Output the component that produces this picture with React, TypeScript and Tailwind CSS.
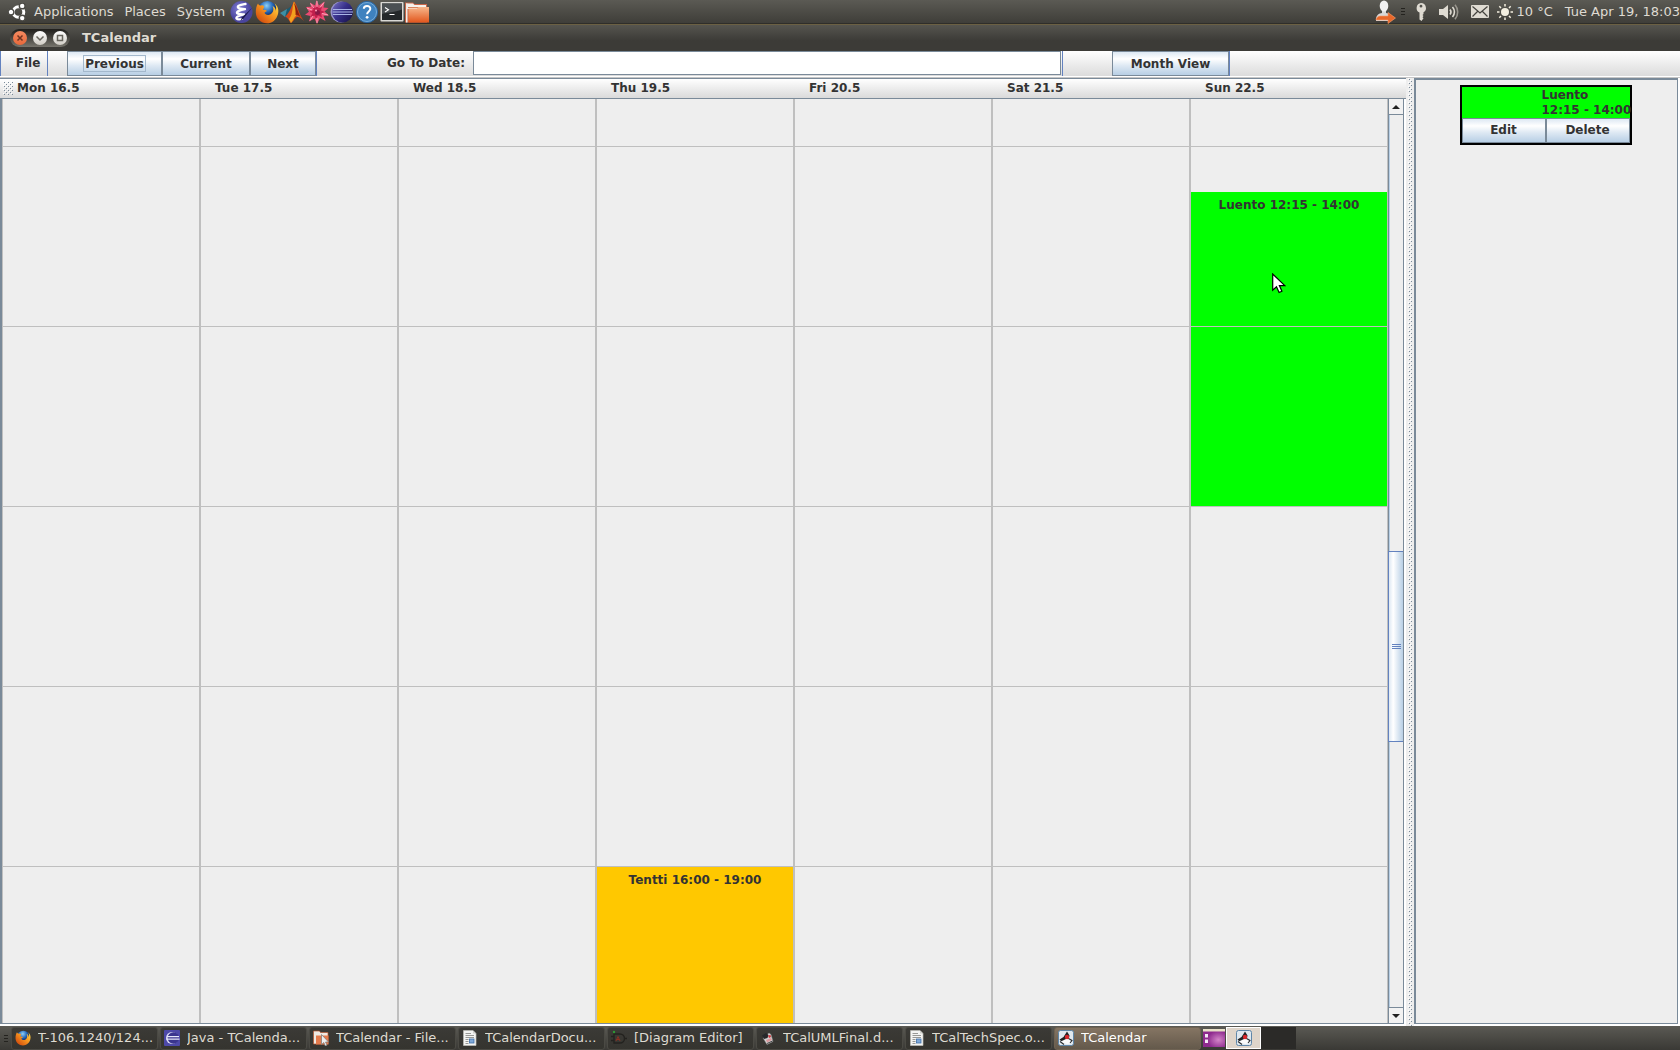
import React from "react";

type IconProps = { className?: string };

/* ---------- panel icons ---------- */

function UbuntuLogo() {
  return (
    <svg viewBox="0 0 18 18" className="size-[18px] shrink-0">
      <circle cx="10.500" cy="9" r="5.300" fill="none" stroke="#fff" strokeWidth="3" />
      <g fill="#fff" stroke="#4b4a45" strokeWidth="1.400">
        <circle cx="3" cy="9" r="2.900" />
        <circle cx="14.200" cy="2.900" r="2.900" />
        <circle cx="14.200" cy="15.100" r="2.900" />
      </g>
    </svg>
  );
}

function EmacsIcon() {
  return (
    <svg viewBox="0 0 24 24" className="size-6">
      <defs>
        <radialGradient id="emacs" cx="0.4" cy="0.35">
          <stop offset="0" stopColor="#8380d4" />
          <stop offset="1" stopColor="#4a459e" />
        </radialGradient>
      </defs>
      <circle cx="11.500" cy="12" r="11" fill="url(#emacs)" />
      <path d="M15.500 4C10.500 5 7 5.500 8 7.500C9 8.800 12 9 15 9.200C10 10 6.500 11.500 7 13C8 14.300 12 14.300 14 14.500C9.500 15.500 5.500 17 6.500 18.500C7.500 19.800 10 19.500 12 19" fill="none" stroke="#fff" strokeWidth="2.300" strokeLinecap="round" strokeLinejoin="round" />
      <path d="M22.500 7.500l-9 11-3 2.500 1.500-3.700Z" fill="#1b1a4c" />
    </svg>
  );
}

function FirefoxIcon({ className = "size-6" }: IconProps) {
  return (
    <svg viewBox="0 0 24 24" className={className}>
      <defs>
        <radialGradient id="fxGlobe" cx="0.45" cy="0.25">
          <stop offset="0" stopColor="#8fd0f5" />
          <stop offset="0.6" stopColor="#2a6fc0" />
          <stop offset="1" stopColor="#12326f" />
        </radialGradient>
        <linearGradient id="fxTail" x1="1" y1="0" x2="0" y2="1">
          <stop offset="0" stopColor="#ffe14a" />
          <stop offset="0.45" stopColor="#f6921e" />
          <stop offset="1" stopColor="#c8380a" />
        </linearGradient>
      </defs>
      <circle cx="12.500" cy="10.500" r="9.500" fill="url(#fxGlobe)" />
      <path d="M3 3.500C3.500 5 4.500 5.500 6 5.500C8 4.500 9.500 6 9 7.500C8.500 8.500 8 9 8 10C9 9.500 11 10 12 11C11 12 9.500 12 9.500 13C11 15.500 15 15.500 17 13C19 10.500 18.500 8 17.500 6C20 7 21 9 20.500 11C21.500 9 21.500 6 19.500 3.500C23 6 24 10 23 14C21.500 20 17 23.300 12 23.300C6 23.300 1 19 .8 12.500C.7 9 1.500 5.500 3 3.500Z" fill="url(#fxTail)" />
    </svg>
  );
}

function MatlabIcon() {
  return (
    <svg viewBox="0 0 24 24" className="size-6">
      <path d="M0 13l7-4 3 3-5 5Z" fill="#3d8fa5" />
      <path d="M7 9c2-.5 4-3 6-6l-1 12-4 4-3-2Z" fill="#1c5a70" />
      <path d="M14 1.500C11.500 5 11 11 5 17c2 0 3 1 5.500 6 3-1 4-5 6.500-6 2-.5 4 1 7 4C19 15 17 4 14 1.500Z" fill="#d2491a" />
      <path d="M14 1.500c-2 4-.5 12-5 17.500l2 4c2-2 3-6 5-7 1-5 0-11-2-14.500Z" fill="#f3a01e" />
      <path d="M14 3c1 3 2 9 1.500 12 1.500-1 3 .5 5 2C18 13 17 6 14 3Z" fill="#8c200c" />
    </svg>
  );
}

function SpikyIcon() {
  return (
    <svg viewBox="0 0 24 24" className="size-6">
      <path d="M11.500 0l2.500 5.500L19.500 1.500 18.500 7.500 23.500 8 19.500 11.500 24 15.500l-5.500.3L20.500 21l-5.500-3-3 6-2.500-5.500L4 21.500l1.500-5.500L0 14.800 4 11.800 1 7l5-.2L5 2.500l5 3Z" fill="#ea4a72" />
      <path d="M12 5l1.500 3 3.500-1.500-1 4 4 1.500-4 1.500 1 4-4-2-2 3.500-1.500-3.500-4 1.500L7.500 13 4.500 11.500l4-1.500L7.500 6l3 2Z" fill="#c0204c" />
      <path d="M12 1v6M5.500 3.500L9 8M19 2.500l-4 5M2 8l5 2M23 15l-6-1.500M5 20.500l3-4.500M12 23v-5" stroke="#ffb0c2" strokeWidth="0.900" />
      <circle cx="12.500" cy="12.500" r="2.500" fill="#8c1846" />
      <circle cx="11" cy="10.500" r="1" fill="#ffa0b8" />
    </svg>
  );
}

function EclipseIcon() {
  return (
    <svg viewBox="0 0 24 24" className="size-6">
      <defs>
        <linearGradient id="ecl" x1="0" y1="0" x2="1" y2="0.8">
          <stop offset="0" stopColor="#7a74c4" />
          <stop offset="0.5" stopColor="#37308a" />
          <stop offset="1" stopColor="#1a1450" />
        </linearGradient>
      </defs>
      <circle cx="11" cy="12" r="10.500" fill="#9a95cc" />
      <circle cx="12.500" cy="12" r="10.500" fill="url(#ecl)" />
      <path d="M3 9.500h19M2.500 12h20.500M3 14.500h19" stroke="#a9b4e6" strokeWidth="1" />
    </svg>
  );
}

function HelpIcon() {
  return (
    <svg viewBox="0 0 24 24" className="size-6">
      <circle cx="12" cy="12" r="10.600" fill="#3f82bf" stroke="#2a65a0" />
      <circle cx="12" cy="12" r="9.500" fill="none" stroke="#83b4dc" strokeWidth="0.800" />
      <path d="M8.800 8.800C9 5 15.500 5.200 15.300 9c-.2 2.400-3.200 2.500-3.200 5.300" fill="none" stroke="#fff" strokeWidth="2" />
      <circle cx="12.100" cy="17.300" r="1.400" fill="#fff" />
    </svg>
  );
}

function TerminalIcon() {
  return (
    <svg viewBox="0 0 24 24" className="size-6">
      <rect x="0.500" y="2" width="23" height="19.500" rx="0.800" fill="#d9d8d4" />
      <rect x="2" y="3.500" width="20" height="16.500" fill="#24282a" />
      <path d="M2 3.500h20v6C14 12.500 8 12 2 14Z" fill="#4b5053" />
      <path d="M5 7.500l3.500 2.200L5 12M9.500 14.500h5" stroke="#fff" strokeWidth="1.100" fill="none" />
    </svg>
  );
}

function FolderIcon() {
  return (
    <svg viewBox="0 0 24 24" className="size-6">
      <defs>
        <linearGradient id="fold" x1="0" y1="0" x2="0" y2="1">
          <stop offset="0" stopColor="#f7b78c" />
          <stop offset="1" stopColor="#e2561c" />
        </linearGradient>
      </defs>
      <path d="M0 2.500h8l1.500 1.500H22v18.500H0Z" fill="#c9674a" />
      <path d="M1 3.500h7l1.500 1.500H21v4H1Z" fill="#f5f1ec" />
      <path d="M1 3.500h1.500v19H1Z" fill="#f2ece4" />
      <path d="M3 7.500h19" stroke="#d9825c" />
      <path d="M3.500 8.500l8.500 0 1.500-1.500H24v15.500H3.500Z" fill="url(#fold)" />
    </svg>
  );
}

function UserSwitchIcon() {
  return (
    <svg viewBox="0 0 22 24" className="h-6 w-[22px]">
      <path d="M1 20c0-5 3-6.500 6-7v-2h4v2c3 .5 5 2 5 6v2H1Z" fill="#d8d8d8" />
      <ellipse cx="9" cy="6" rx="4.300" ry="5.500" fill="#f1f1f1" />
      <path d="M5 16h8v-3.500l7.500 5.500-7.500 5.500V20H1c0-2 2-4 4-4Z" fill="#e8682a" stroke="#f7a070" strokeWidth="0.600" />
    </svg>
  );
}

function KeyIcon() {
  return (
    <svg viewBox="0 0 12 18" className="h-[18px] w-3" fill="#dfdbd2">
      <path fillRule="evenodd" d="M6 0a5 5 0 0 1 2.500 9.300V11l-1 1 1 1-1 1.200 1 1L6.500 18 4.500 16.500V9.500A5 5 0 0 1 6 0Zm0 1.800a1.400 1.400 0 1 0 0 2.800 1.400 1.400 0 0 0 0-2.800Z" />
    </svg>
  );
}

function SpeakerIcon() {
  return (
    <svg viewBox="0 0 20 18" className="h-[18px] w-5" fill="none" stroke="#dfdbd2" strokeWidth="1.600">
      <path d="M0 6h4l5-4v14l-5-4H0Z" fill="#dfdbd2" stroke="none" />
      <path d="M11 6.500a4 4 0 0 1 0 5M13.500 4a7.500 7.500 0 0 1 0 10" />
      <path d="M16 1.800a11 11 0 0 1 0 14.400" stroke="#98958d" />
    </svg>
  );
}

function MailIcon() {
  return (
    <svg viewBox="0 0 18 13" className="h-[13px] w-[18px]">
      <rect width="18" height="13" rx="1" fill="#dfdbd2" />
      <path d="M1.500 1.500L9 8l7.500-6.500M1.500 11.500L6.500 6.500M16.500 11.500l-5-5" stroke="#45443f" fill="none" strokeWidth="1.200" />
    </svg>
  );
}

function SunIcon() {
  return (
    <svg viewBox="0 0 16 16" className="size-4">
      <circle cx="8" cy="8" r="4" fill="#f3eee0" />
      <path d="M8 0v2.500M8 13.500V16M0 8h2.500M13.500 8H16M2.300 2.300l1.700 1.700M12 12l1.700 1.700M2.300 13.700L4 12M12 4l1.700-1.700" stroke="#f3eee0" strokeWidth="1.500" />
    </svg>
  );
}

/* ---------- task list icons ---------- */

function EclipseTask() {
  return (
    <svg viewBox="0 0 16 16" className="size-4">
      <rect width="16" height="16" rx="1" fill="#4d49a8" />
      <circle cx="8" cy="8" r="6" fill="#dcdcf4" />
      <circle cx="9.300" cy="8" r="5.700" fill="#3a358e" />
      <path d="M3 6.700h12M2.500 9.200h13" stroke="#e6e8fa" strokeWidth="1.200" />
    </svg>
  );
}

function FilesTask() {
  return (
    <svg viewBox="0 0 16 16" className="size-4">
      <path d="M.5 1h6l1 1.500H15V14H.5Z" fill="#efe9e2" stroke="#b6552f" strokeWidth="0.700" />
      <path d="M3 5.500h12.500v9H3Z" fill="#e47a4c" />
      <path d="M8.500 4.500v10l2.300-2 1.500 3.500 1.700-.8-1.500-3.200h3Z" fill="#eee" stroke="#777" strokeWidth="0.700" />
    </svg>
  );
}

function DocTask() {
  return (
    <svg viewBox="0 0 16 16" className="size-4">
      <path d="M1.500.5H11l3 3v12H1.500Z" fill="#f4f4f2" stroke="#bdbdb8" strokeWidth="0.700" />
      <path d="M11 .5v3h3" fill="#d0d0cc" />
      <path d="M3.500 3.500H9M3.500 5.500h8.500M3.500 7.500h8.500M3.500 9.500h3M3.500 11.500h3M3.500 13.500h3" stroke="#8d8d8a" strokeWidth="0.900" />
      <rect x="7.500" y="9" width="4.500" height="4" fill="#7fa8d8" stroke="#3f6fa8" strokeWidth="0.800" />
    </svg>
  );
}

function DiaTask() {
  return (
    <svg viewBox="0 0 16 16" className="size-4" fill="none">
      <path d="M3 4h6a4.500 4.500 0 0 1 0 9H3ZM0 6.500h3M0 10.500h3M13.500 8.500H16" stroke="#23221f" strokeWidth="1.400" />
      <path d="M5 11l2-4.500L9 11M5.500 9.500h3" stroke="#8a2f22" />
      <circle cx="3" cy="2" r="1.200" fill="#2e9a35" />
    </svg>
  );
}

function DiagramTask() {
  return (
    <svg viewBox="0 0 16 16" className="size-4">
      <path d="M3 8l6-5 2 1.500 2 7-6 3Z" fill="#d4d4d4" stroke="#8a8a8a" strokeWidth="0.500" />
      <path d="M2 5.500L6 3l2.500 2-1 3L4 9Z" fill="#26282a" />
      <path d="M8 5.500l2.500-.5.5 2-2 1Z" fill="#d0343c" />
      <path d="M6 10l5-2 1 2-5 2.500Z" fill="#d99a9e" />
      <path d="M7 13.500l5.500-2.500" stroke="#444" />
    </svg>
  );
}

function JavaTask() {
  return (
    <svg viewBox="0 0 16 16" className="size-4">
      <rect x="0.500" y="0.500" width="15" height="15" rx="2" fill="#dfe8ef" stroke="#5f86a8" />
      <path d="M9 1.500l2.500 4-1 5L3 11 1.500 9.500l4-2.500Z" fill="#202224" />
      <path d="M4 11l5-2.500 3 .5 1.500 4-4 1-5-1Z" fill="#fafafa" />
      <path d="M2 11.500l4 3M10.500 8.500l3.500 2-2 2.500" stroke="#2a2c2e" strokeWidth="1.100" fill="none" />
      <circle cx="9" cy="7" r="2.200" fill="#d8272c" />
    </svg>
  );
}

/* ---------- Metal look and feel pieces ---------- */

const METAL_BUTTON =
  "border border-[#7a8a99] bg-linear-[180deg,#dde8f3_0%,#ffffff_30%,#dde8f3_60%,#b8cfe5_100%] text-center";

function Bumps({ id, className }: { id: string; className: string }) {
  return (
    <svg className={className} aria-hidden="true">
      <defs>
        <pattern id={id} width="4" height="4" patternUnits="userSpaceOnUse">
          <rect width="1" height="1" fill="#fff" />
          <rect x="1" y="1" width="1" height="1" fill="#7a8a99" />
          <rect x="2" y="2" width="1" height="1" fill="#fff" />
          <rect x="3" y="3" width="1" height="1" fill="#7a8a99" />
        </pattern>
      </defs>
      <rect width="100%" height="100%" fill={`url(#${id})`} />
    </svg>
  );
}

function PanelGrip() {
  return (
    <span className="flex flex-col gap-[2px]">
      <i className="h-px w-1 bg-[#24231f]" />
      <i className="h-px w-1 bg-[#24231f]" />
      <i className="h-px w-1 bg-[#24231f]" />
    </span>
  );
}

function TopPanel() {
  return (
    <header className="flex h-6 shrink-0 items-center border-b border-[#2f2e2a] bg-linear-to-b from-[#5b5a54] to-[#3f3e39] pl-2 text-[13px] leading-4 text-[#dfdbd2]">
      <UbuntuLogo />
      <nav className="ml-2 flex gap-[11px]">
        <button>Applications</button>
        <button>Places</button>
        <button>System</button>
      </nav>
      <div className="ml-[5px] flex gap-px">
        <button aria-label="Emacs"><EmacsIcon /></button>
        <button aria-label="Firefox"><FirefoxIcon /></button>
        <button aria-label="Matlab"><MatlabIcon /></button>
        <button aria-label="Mathematica"><SpikyIcon /></button>
        <button aria-label="Eclipse"><EclipseIcon /></button>
        <button aria-label="Help"><HelpIcon /></button>
        <button aria-label="Terminal"><TerminalIcon /></button>
        <button aria-label="Files"><FolderIcon /></button>
      </div>
      <div className="ml-auto flex items-center whitespace-nowrap">
        <UserSwitchIcon />
        <span className="mr-2.5 ml-1 flex"><PanelGrip /></span>
        <KeyIcon />
        <span className="ml-3 flex"><SpeakerIcon /></span>
        <span className="mr-2 ml-3 flex"><MailIcon /></span>
        <SunIcon />
        <span className="ml-1">10 °C</span>
        <span className="ml-3">Tue Apr 19, 18:03</span>
      </div>
    </header>
  );
}

function TitleBar() {
  return (
    <div className="flex h-[27px] shrink-0 items-center border-t border-[#6b6043] bg-linear-to-b from-[#56554f] to-[#3c3b37] to-60% pl-2.5">
      <div className="flex h-[18px] w-[60px] items-center justify-center gap-1.5 rounded-full bg-linear-to-b from-[#201f1c] to-[#77756d]">
        <button aria-label="Close" className="rounded-full bg-linear-to-b from-[#f58a60] to-[#e8683a]">
          <svg viewBox="0 0 14 14" className="size-3.5"><path d="M4.500 4.500l5 5M9.500 4.500l-5 5" stroke="#6f3422" strokeWidth="1.500" /></svg>
        </button>
        <button aria-label="Minimize" className="rounded-full bg-linear-to-b from-white to-[#d0cdc5]">
          <svg viewBox="0 0 14 14" className="size-3.5"><path d="M3.500 5.500L7 9l3.500-3.500" fill="none" stroke="#66645c" strokeWidth="1.500" /></svg>
        </button>
        <button aria-label="Maximize" className="rounded-full bg-linear-to-b from-white to-[#d0cdc5]">
          <svg viewBox="0 0 14 14" className="size-3.5"><rect x="4.500" y="4.500" width="5" height="5" fill="none" stroke="#66645c" strokeWidth="1.500" /></svg>
        </button>
      </div>
      <h1 className="ml-3 text-[13px] leading-4 font-bold text-[#dfdbd2]">TCalendar</h1>
    </div>
  );
}

function Toolbar() {
  return (
    <div className="flex h-[27px] shrink-0 border-b border-[#c6c6c6] bg-linear-to-b from-white to-[#dadada]">
      <div className="flex w-full border-b border-white leading-[25px]">
        <button className="w-12 border-x border-[#6382bf] pl-2">File</button>
        <div className="ml-[19px] flex border-r border-[#6382bf]">
          <button className={`${METAL_BUTTON} flex w-[95px] items-center justify-center`}>
            <span className="h-[17px] w-[63px] border border-[#a3b8cc] leading-4">Previous</span>
          </button>
          <button className={`${METAL_BUTTON} w-[88px]`}>Current</button>
          <button className={`${METAL_BUTTON} w-[66px]`}>Next</button>
        </div>
        <label htmlFor="goto" className="ml-[70px] w-[86px] whitespace-nowrap">Go To Date:</label>
        <div className="flex max-w-[590px] min-w-0 flex-1 border-r border-[#6382bf]">
          <input id="goto" type="text" className="mr-px h-6 min-w-0 flex-1 border border-[#7a8a99] bg-white px-1 outline-none" />
        </div>
        <div className="ml-[49px] border-r border-[#6382bf]">
          <button className={`${METAL_BUTTON} h-full w-[117px]`}>Month View</button>
        </div>
      </div>
    </div>
  );
}

function Pointer() {
  return (
    <svg viewBox="0 0 14 21" className="absolute top-[81px] left-[81px] h-[21px] w-3.5" aria-hidden="true">
      <path d="M.7 1v16.200l3.800-3.500 2.600 5.800 2.800-1.200-2.500-5.700h5.400Z" fill="#fff" stroke="#000" strokeWidth="1.200" />
    </svg>
  );
}

type CalEvent = { title: string; rows: string; color: string; pointer?: boolean };
const DAYS: { label: string; event?: CalEvent }[] = [
  { label: "Mon 16.5" },
  { label: "Tue 17.5" },
  { label: "Wed 18.5" },
  { label: "Thu 19.5", event: { title: "Tentti 16:00 - 19:00", rows: "row-start-18 row-span-12", color: "bg-[#ffc800]" } },
  { label: "Fri 20.5" },
  { label: "Sat 21.5" },
  { label: "Sun 22.5", event: { title: "Luento 12:15 - 14:00", rows: "row-start-3 row-span-7", color: "bg-[#00ff00]", pointer: true } },
];

/* The first row is the visible rest of the 11 o'clock hour; every later row is a quarter of an hour. */
const HOUR_ROWS = [
  "row-start-1",
  "row-start-2 row-span-4",
  "row-start-6 row-span-4",
  "row-start-10 row-span-4",
  "row-start-14 row-span-4",
  "row-start-18 row-span-4",
];

function DayColumn({ event }: { event?: CalEvent }) {
  return (
    <div className="grid auto-rows-[45px] grid-cols-1 grid-rows-[48px] border-r-2 border-[#bfbfbf]">
      {event && (
        <div className={`relative col-start-1 ${event.rows} ${event.color} pt-[5px] text-center leading-4 whitespace-nowrap`}>
          {event.title}
          {event.pointer && <Pointer />}
        </div>
      )}
      {HOUR_ROWS.map((row) => (
        <div key={row} className={`z-10 col-start-1 ${row} border-b border-[#bfbfbf]`} />
      ))}
    </div>
  );
}

function ScrollBar() {
  return (
    <div className="z-20 flex w-4 shrink-0 flex-col border-x border-[#7a8a99] bg-[#eeeeee]">
      <button aria-label="Scroll up" className="flex h-4 shrink-0 items-center justify-center border-b border-[#7a8a99] bg-[#f2f2f2]">
        <svg viewBox="0 0 8 4" className="h-1 w-2"><path d="M0 4l4-4 4 4Z" fill="#222" /></svg>
      </button>
      <div className="flex min-h-0 flex-1 flex-col border-l border-[#b8cfe5]">
        <div className="grow-[436] basis-0" />
        <div className="-ml-0.5 flex grow-[190] basis-0 flex-col items-center justify-center gap-px border-y border-l border-[#6382bf] bg-linear-to-r from-[#dde8f3] via-white via-30% to-[#b8cfe5]">
          <i className="h-px w-[9px] bg-[#6382bf]" />
          <i className="h-px w-[9px] bg-[#6382bf]" />
          <i className="h-px w-[9px] bg-[#6382bf]" />
        </div>
        <div className="grow-[265] basis-0" />
      </div>
      <button aria-label="Scroll down" className="flex h-4 shrink-0 items-center justify-center border-t border-[#7a8a99] bg-[#f2f2f2]">
        <svg viewBox="0 0 8 4" className="h-1 w-2"><path d="M0 0h8l-4 4Z" fill="#222" /></svg>
      </button>
    </div>
  );
}

function WeekView() {
  return (
    <section className="flex min-w-0 flex-1 flex-col">
      <div className="h-[21px] shrink-0 border-y border-[#7a8a99] bg-linear-to-b from-white to-[#dadada]">
        <div className="mr-[17px] ml-[3px] grid h-[18px] grid-cols-7">
          {DAYS.map((day, i) => (
            <div key={day.label} className="flex items-center gap-1 leading-4">
              {i === 0 ? <Bumps id="gripBumps" className="h-3.5 w-2.5" /> : <span className="w-2.5" />}
              {day.label}
            </div>
          ))}
        </div>
      </div>
      <div className="mr-0.5 mb-0.5 flex min-h-0 flex-1 overflow-hidden border-b border-l-2 border-[#7a8a99] bg-[#eeeeee]">
        <div className="-mr-px grid min-w-0 flex-1 grid-cols-7 overflow-hidden border-l border-[#bfbfbf]">
          {DAYS.map((day) => (
            <DayColumn key={day.label} event={day.event} />
          ))}
        </div>
        <ScrollBar />
      </div>
    </section>
  );
}

function DayPanel() {
  return (
    <aside className="mr-0.5 mb-0.5 w-[264px] shrink-0 border border-t-2 border-l-2 border-[#7a8a99] bg-[#eeeeee] pt-[5px] pr-0.5">
      <article className="mx-auto w-[172px] border-2 border-black bg-[#00ff00]">
        <p className="pt-px pl-20 leading-[15px] whitespace-nowrap">
          Luento
          <br />
          12:15 - 14:00
        </p>
        <div className="grid grid-cols-2 leading-[23px]">
          <button className={METAL_BUTTON}>Edit</button>
          <button className={METAL_BUTTON}>Delete</button>
        </div>
      </article>
    </aside>
  );
}

const TASKS = [
  { label: "T-106.1240/124...", icon: <FirefoxIcon className="size-4" /> },
  { label: "Java - TCalenda...", icon: <EclipseTask /> },
  { label: "TCalendar - File...", icon: <FilesTask /> },
  { label: "TCalendarDocu...", icon: <DocTask /> },
  { label: "[Diagram Editor]", icon: <DiaTask /> },
  { label: "TCalUMLFinal.d...", icon: <DiagramTask /> },
  { label: "TCalTechSpec.o...", icon: <DocTask /> },
  { label: "TCalendar", icon: <JavaTask />, active: true },
];

function TaskBar() {
  return (
    <footer className="flex h-6 shrink-0 items-center bg-linear-to-b from-[#5b5a54] to-[#3a3935] pl-1 text-[13px] leading-4 text-[#dfdbd2]">
      <span className="mr-[3px] flex"><PanelGrip /></span>
      <div className="flex h-full min-w-0 items-end gap-0.5">
        {TASKS.map((task) => (
          <button
            key={task.label}
            className={`flex h-[23px] w-[147px] min-w-0 items-center gap-[7px] rounded-[3px] border pb-0.5 pl-[3px] text-left whitespace-nowrap ${
              task.active
                ? "border-[#6f6353] bg-linear-to-b from-[#857563] to-[#64594b] text-white"
                : "border-[#4b4a44] bg-linear-to-b from-[#3b3a36] to-[#35342f]"
            }`}
          >
            <span className="shrink-0">{task.icon}</span>
            <span className="overflow-hidden">{task.label}</span>
          </button>
        ))}
      </div>
      <button aria-label="Desktop session" className="ml-0.5">
        <svg viewBox="0 0 22 18" className="h-[18px] w-[22px]">
          <defs>
            <radialGradient id="desk" cx="0.7" cy="0.6">
              <stop offset="0" stopColor="#d486c8" />
              <stop offset="1" stopColor="#8e2a8e" />
            </radialGradient>
          </defs>
          <rect width="22" height="18" fill="url(#desk)" />
          <rect width="22" height="2.500" fill="#e8e0c8" />
          <rect x="2" y="5" width="3" height="3.500" fill="#f5e8f5" />
          <rect x="2" y="10.500" width="3" height="3.500" fill="#f5e8f5" />
        </svg>
      </button>
      <button aria-label="Workspace 1" className="ml-px flex h-[22px] w-[35px] items-center justify-center border border-white bg-[#dfd5ca]">
        <JavaTask />
      </button>
      <button aria-label="Workspace 2" className="h-[22px] w-[35px] bg-[#2b2a28]" />
    </footer>
  );
}

export default function App() {
  return (
    <div className="flex h-screen flex-col overflow-hidden bg-white font-['DejaVu_Sans',sans-serif]">
      <TopPanel />
      <TitleBar />
      <main className="flex min-h-0 flex-1 flex-col text-xs font-bold text-[#333333]">
        <Toolbar />
        <div className="flex min-h-0 flex-1">
          <WeekView />
          <div className="w-2 shrink-0 bg-[#eeeeee] px-0.5">
            <Bumps id="splitBumps" className="h-full w-1" />
          </div>
          <DayPanel />
        </div>
      </main>
      <TaskBar />
    </div>
  );
}
